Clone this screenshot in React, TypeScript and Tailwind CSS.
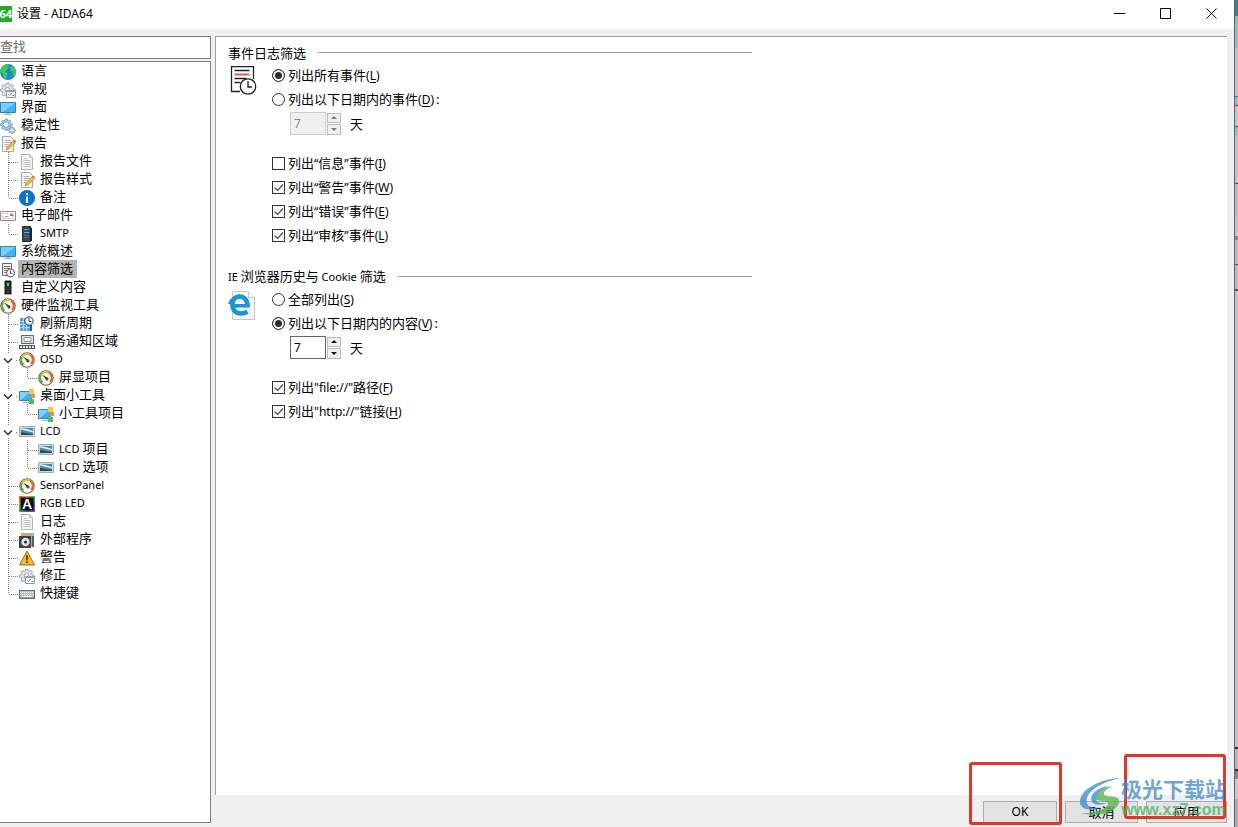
import React, { useState } from 'react';

type IconName =
  | 'globe' | 'gear' | 'monitor' | 'cogs' | 'report' | 'file' | 'info' | 'mail' | 'server' | 'filter'
  | 'tower' | 'gauge' | 'refresh' | 'tray' | 'gadget' | 'lcd' | 'rgb' | 'speaker' | 'warning' | 'keyboard';

type Guide = 'line' | 'tee' | 'end' | 'open';

interface TreeItem {
  label: string;
  icon: IconName;
  guides?: Guide[];
}

const TREE: TreeItem[] = [
  { label: '语言', icon: 'globe' },
  { label: '常规', icon: 'gear' },
  { label: '界面', icon: 'monitor' },
  { label: '稳定性', icon: 'cogs' },
  { label: '报告', icon: 'report' },
  { label: '报告文件', icon: 'file', guides: ['tee'] },
  { label: '报告样式', icon: 'report', guides: ['tee'] },
  { label: '备注', icon: 'info', guides: ['end'] },
  { label: '电子邮件', icon: 'mail' },
  { label: 'SMTP', icon: 'server', guides: ['end'] },
  { label: '系统概述', icon: 'monitor' },
  { label: '内容筛选', icon: 'filter' },
  { label: '自定义内容', icon: 'tower' },
  { label: '硬件监视工具', icon: 'gauge' },
  { label: '刷新周期', icon: 'refresh', guides: ['tee'] },
  { label: '任务通知区域', icon: 'tray', guides: ['tee'] },
  { label: 'OSD', icon: 'gauge', guides: ['open'] },
  { label: '屏显项目', icon: 'gauge', guides: ['line', 'end'] },
  { label: '桌面小工具', icon: 'gadget', guides: ['open'] },
  { label: '小工具项目', icon: 'gadget', guides: ['line', 'end'] },
  { label: 'LCD', icon: 'lcd', guides: ['open'] },
  { label: 'LCD 项目', icon: 'lcd', guides: ['line', 'tee'] },
  { label: 'LCD 选项', icon: 'lcd', guides: ['line', 'end'] },
  { label: 'SensorPanel', icon: 'gauge', guides: ['tee'] },
  { label: 'RGB LED', icon: 'rgb', guides: ['tee'] },
  { label: '日志', icon: 'file', guides: ['tee'] },
  { label: '外部程序', icon: 'speaker', guides: ['tee'] },
  { label: '警告', icon: 'warning', guides: ['tee'] },
  { label: '修正', icon: 'gear', guides: ['tee'] },
  { label: '快捷键', icon: 'keyboard', guides: ['end'] },
];

// slices of the window behind, visible along the right edge
const BACKDROP = [
  'h-4 bg-[#2f8496]', 'h-8 bg-[#8dbdc6]', 'h-12 bg-[#c3c6c6]', 'h-px bg-[#3e7c8a]', 'h-2 bg-[#93bfc7]',
  'h-px bg-[#444]', 'h-5 bg-[#bccbce]', 'h-px bg-[#444]', 'h-2 bg-[#93bfc7]', 'h-12 bg-[#c3c6c6]',
  'h-px bg-[#444]', 'h-8 bg-[#b9bcbc]', 'h-5 bg-[#c3c6c6]', 'h-1 bg-[#8a8d8d]', 'h-6 bg-[#b9bcbc]',
  'h-px bg-[#555]', 'h-6 bg-[#b9bcbc]', 'h-0.5 bg-[#555]', 'flex-1 bg-[#c3c6c6]', 'h-0.5 bg-[#333]',
  'h-5 bg-[#b5b8b8]', 'h-0.5 bg-[#333]', 'h-2 bg-[#858888]', 'h-5 bg-[#c9cccc]', 'h-7 bg-[#a9acac]',
];

// Latin runs are set smaller than the CJK text around them
const Mixed: React.FC<{ text: string; latin?: string }> = ({ text, latin = 'text-[11px]' }) => (
  <>
    {text.split(/([\x20-\x7e“”]+)/).filter(Boolean).map((part, i) =>
      /^[\x20-\x7e“”]/.test(part) ? <span key={i} className={`whitespace-pre ${latin}`}>{part}</span> : part
    )}
  </>
);

const GEAR = 'M6.6 1h2.2l.4 1.9 1.2.5L12 2.3l1.6 1.6-1.1 1.6.5 1.2 1.9.4v2.2l-1.9.4-.5 1.2 1.1 1.6-1.6 1.6-1.6-1.1-1.2.5-.4 1.9H6.6l-.4-1.9-1.2-.5-1.6 1.1-1.6-1.6 1.1-1.6-.5-1.2-1.9-.4V7.1l1.9-.4.5-1.2-1.1-1.6 1.6-1.6L5 3.4l1.2-.5z';

const ICONS: Record<IconName, React.ReactNode> = {
  globe: (
    <>
      <circle cx="8" cy="8" r="8" fill="#1f86d8" />
      <path d="M1 4Q4 0 8 0l1 2-2 1 1 2-3 2 2 2v3l-1 3-2-1-1-4-3-3zM11 2l3 1 2 5-1 4-2-1v-3l-2-1-1-3z" fill="#42cf45" />
    </>
  ),
  gear: (
    <>
      <path d={GEAR} fill="#dde2e6" stroke="#98a1a8" strokeWidth=".9" />
      <circle cx="7.5" cy="8" r="2.4" fill="#fff" stroke="#98a1a8" />
      <path d="M6.5 8.5h9v7h-9z" fill="#f7fbff" stroke="#8c969e" />
      <path d="M6 8h10v2H6z" fill="#9aa4ab" />
      <path d="m8.5 12.5 1 1 2-2.3M12.5 13.5h1.5" fill="none" stroke="#2c83cf" />
    </>
  ),
  monitor: (
    <>
      <path d="M.5 2.5h15v10H.5z" fill="#42b4f5" stroke="#3c7fa8" />
      <path d="M1 3h14L3 12H1z" fill="#78d0ff" />
      <path d="M6 13h4v1h2v1H4v-1h2z" fill="#8fc4e4" />
    </>
  ),
  cogs: (
    <>
      <path d={GEAR} transform="scale(.82)" fill="#a9cfe8" stroke="#6f9cba" />
      <circle cx="6.2" cy="6.5" r="2.9" fill="#f4faff" stroke="#6f9cba" />
      <path d={GEAR} transform="translate(8.5 8.5) scale(.46)" fill="#b5cbdc" stroke="#7593a8" strokeWidth="1.5" />
      <circle cx="12" cy="12.2" r="1" fill="#fff" />
    </>
  ),
  report: (
    <>
      <path d="M2.5.5h8l3 3v12h-11z" fill="#f8f8f8" stroke="#a6a6a6" />
      <path d="M4.5 4.5h6M4.5 6.5h7M4.5 8.5h4M4.5 10.5h3" stroke="#b5b5b5" />
      <path d="m6 14 1-3 7-7 2 2-7 7z" fill="#f5b63c" stroke="#c27d20" strokeWidth=".6" />
      <path d="m13 5 1-1.5L16 5l-1 1.5z" fill="#e0656a" />
    </>
  ),
  file: (
    <>
      <path d="M2.5.5h8l3 3v12h-11z" fill="#f5f5f5" stroke="#b3b3b3" />
      <path d="M10.5.5v3h3M4.5 4.5h4M4.5 6.5h7M4.5 8.5h7M4.5 10.5h7M4.5 12.5h7" fill="none" stroke="#c2c2c2" />
    </>
  ),
  info: (
    <>
      <circle cx="8" cy="8" r="7.7" fill="#0b74d1" stroke="#075ba8" strokeWidth=".6" />
      <path d="M7 3h2v2H7zM7 6.5h2V13H7z" fill="#fff" />
    </>
  ),
  mail: (
    <>
      <path d="M.5 3.5h15v9H.5z" fill="#fafafa" stroke="#8f8f8f" />
      <path d="M2.5 5.5h11v5h-11z" fill="none" stroke="#e2a0a0" strokeDasharray="2 2" />
      <path d="M4.5 8.5h4" stroke="#aaa" />
      <path d="M10 6h3v2h-3z" fill="#5b94cc" />
    </>
  ),
  server: (
    <>
      <path d="M3.5.5h8v15h-8z" fill="#34485c" stroke="#222f3d" />
      <path d="m11 1 2 1v13l-2 .5z" fill="#1b2530" />
      <path d="M5 3.5h5M5 6.5h5" stroke="#52b3f3" />
      <path d="M5 9.5h5M5 11.5h5" stroke="#566e84" />
    </>
  ),
  filter: (
    <>
      <path d="M2.5 1.5h9v12h-9z" fill="#f3f3f3" stroke="#666" />
      <path d="M4 4.5h6" stroke="#d33c3c" />
      <path d="M4 6.5h6M4 8.5h3M4 10.5h2" stroke="#777" />
      <circle cx="10.5" cy="11" r="4" fill="#fff" stroke="#555" />
      <path d="M10.5 8.5v3h2" fill="none" stroke="#555" />
    </>
  ),
  tower: (
    <>
      <path d="M5 1h6v13H5z" fill="#303030" stroke="#161616" />
      <path d="M7 3h2v3H7z" fill="#49db54" />
      <path d="M4 14h8v1H4z" fill="#a3a3a3" />
    </>
  ),
  gauge: (
    <>
      <circle cx="8" cy="8" r="7.2" fill="#fdfaf2" stroke="#6f624f" strokeWidth="1.1" />
      <path d="M4.5 12.5A5.6 5.6 0 0 1 3 5" fill="none" stroke="#43ad48" strokeWidth="2" />
      <path d="M3 5A5.6 5.6 0 0 1 11 3" fill="none" stroke="#efb52f" strokeWidth="2" />
      <path d="M11 3A5.6 5.6 0 0 1 12 12" fill="none" stroke="#e2632f" strokeWidth="2" />
      <path d="M4 4.5 10 8l-1.5 2z" fill="#333" />
      <circle cx="9" cy="9" r="1.5" fill="#444" />
    </>
  ),
  refresh: (
    <>
      <path d="M1 2h10v13H1z" fill="#55a2dc" />
      <path d="M1 5.5h10M1 8.5h10M1 11.5h12M4.5 2v13M7.5 2v13" stroke="#a8d6f5" />
      <path d="M11 9h2v6h-2z" fill="#2d5d90" />
      <circle cx="10" cy="5" r="4.2" fill="#f8f8f8" stroke="#333" />
      <path d="M10 2v3.5h2.5" fill="none" stroke="#333" />
    </>
  ),
  tray: (
    <>
      <path d="M2.5 1.5h12v8h-12z" fill="#dbe7f3" stroke="#5c6771" />
      <path d="M5 3.5h7v4H5z" fill="#fff" stroke="#8298ac" />
      <path d="M0 11h16v4H0z" fill="#4d565e" />
      <path d="M1 13h14" stroke="#e7edf2" strokeWidth="2" strokeDasharray="2 1" />
    </>
  ),
  gadget: (
    <>
      <path d="M.5 3.5h12v9H.5z" fill="#3cb0f3" stroke="#3981ad" />
      <path d="M1 4h10L2 12H1z" fill="#7ad2ff" />
      <path d="M4 14h6v1H4z" fill="#88bddd" />
      <path d="M10 1h5v5h-5z" fill="#f6c83e" />
      <path d="M12 6h4v4h-4z" fill="#ed8d55" />
      <path d="M10 11h5v5h-5z" fill="#48c152" />
    </>
  ),
  lcd: (
    <>
      <path d="M.5 2.5h15v10H.5z" fill="#d0d5d9" stroke="#a5adb3" />
      <path d="M2 4h12v7H2z" fill="#4c88b3" />
      <path d="M2 5.500 8 7l6 1.500V7L8 5 2 4z" fill="#d8edf7" />
      <path d="m2 8 5 1 7 1v1H2z" fill="#264d56" />
    </>
  ),
  rgb: (
    <>
      <defs>
        <linearGradient id="rainbow" x1="0" y1="0" x2="1" y2="1">
          <stop offset="0" stopColor="#f33" />
          <stop offset=".25" stopColor="#e8a020" />
          <stop offset=".5" stopColor="#2fc04f" />
          <stop offset=".75" stopColor="#3355f0" />
          <stop offset="1" stopColor="#b02fd8" />
        </linearGradient>
      </defs>
      <path d="M0 0h16v16H0z" fill="url(#rainbow)" />
      <path d="M1.5 1.5h13v13h-13z" fill="#0b0b12" />
      <text x="8" y="13" textAnchor="middle" fontSize="13" fontWeight="900" fill="#fff" fontFamily="Lato, sans-serif">A</text>
    </>
  ),
  speaker: (
    <>
      <path d="M2 1h13v14H2z" fill="#d7a66d" />
      <path d="M8 1h7v7z" fill="#8bc1a5" />
      <path d="M0 4h12v12H0z" fill="#39434f" />
      <circle cx="6.5" cy="10" r="4.2" fill="#dfe4e8" />
      <circle cx="6.5" cy="10" r="1.6" fill="#303942" />
      <path d="M13 4h2v11h-2z" fill="#50606d" />
    </>
  ),
  warning: (
    <>
      <path d="M8 1 15.5 15H.5z" fill="#fcb72c" stroke="#9b6c19" strokeLinejoin="round" />
      <path d="M7.2 5.5h1.700l-.3 5H7.5zM7.2 11.5h1.600v1.600H7.2z" fill="#222" />
    </>
  ),
  keyboard: (
    <>
      <path d="M0 4h16v9H0z" fill="#6c737a" />
      <path d="M1 5h14v6.5H1z" fill="#b9bfc4" />
      <path d="M1 6.5h14M1 8.5h14" stroke="#f3f5f6" strokeDasharray="1 1" />
      <path d="M3 10.5h10" stroke="#f3f5f6" />
    </>
  ),
};

const GuideCell: React.FC<{ kind: Guide }> = ({ kind }) => (
  <svg width="19" height="18" className="shrink-0" fill="none" stroke="#7d7d7d" strokeDasharray="1 1">
    {kind === 'end' ? <path d="M8.5 0v10" /> : <path d="M8.5 0v18" />}
    {(kind === 'tee' || kind === 'end') && <path d="M9 10.5h9" />}
    {kind === 'open' && (
      <>
        <path d="M2 4h12v12H2z" fill="#fff" stroke="none" />
        <path d="M16 10.5h2" />
        <path d="m4 8.5 4 4 4-4" stroke="#333" strokeWidth="1.5" strokeDasharray="none" />
      </>
    )}
  </svg>
);

const Accel: React.FC<{ text: string; hotkey: string; suffix?: string }> = ({ text, hotkey, suffix }) => (
  <span className="whitespace-nowrap">
    <Mixed text={text} latin="text-xs" />
    <span className="text-xs">(<u className="underline-offset-2">{hotkey}</u>)</span>
    {suffix && <span className="ml-0.5">{suffix}</span>}
  </span>
);

interface OptionProps {
  text: string;
  hotkey: string;
  suffix?: string;
}

const Radio: React.FC<OptionProps & { name: string; checked: boolean; onSelect: () => void }> = ({
  name, checked, onSelect, ...label
}) => (
  <label className="flex h-6 items-center gap-[3px]">
    <input
      type="radio"
      name={name}
      checked={checked}
      onChange={onSelect}
      className="size-[13px] appearance-none rounded-full border border-[#333] bg-white checked:bg-[#2b3038] checked:shadow-[inset_0_0_0_2px_#fff]"
    />
    <Accel {...label} />
  </label>
);

const Check: React.FC<OptionProps & { initial?: boolean }> = ({ initial = true, ...label }) => {
  const [on, setOn] = useState(initial);
  return (
    <label className="flex h-6 items-center gap-[3px]">
      <span className="grid size-[13px]">
        <input
          type="checkbox"
          checked={on}
          onChange={() => setOn(!on)}
          className="col-start-1 row-start-1 size-[13px] appearance-none border border-[#333] bg-white"
        />
        {on && (
          <svg viewBox="0 0 13 13" className="pointer-events-none col-start-1 row-start-1 size-[13px]" fill="none" stroke="#444" strokeWidth="1.2">
            <path d="m2.5 6.5 3 3 5.5-6" />
          </svg>
        )}
      </span>
      <Accel {...label} />
    </label>
  );
};

const DaySpinner: React.FC<{ disabled?: boolean }> = ({ disabled }) => {
  const [days, setDays] = useState(7);
  const arrow = disabled ? '#777' : '#111';
  const button = 'grid flex-1 place-items-center border border-[#bbb] bg-[#f0f0f0]';
  return (
    <div className="ml-[18px] flex h-[25px] items-center">
      <input
        type="text"
        aria-label="天"
        value={days}
        disabled={disabled}
        onChange={(e) => setDays(Number(e.target.value) || 0)}
        className="h-[23px] w-9 border border-[#666] bg-white px-[3px] text-xs disabled:border-[#ccc] disabled:bg-[#f0f0f0] disabled:text-[#888]"
      />
      <div className="ml-px flex h-[22px] w-[14px] flex-col gap-px">
        <button type="button" aria-label="+" disabled={disabled} onClick={() => setDays(days + 1)} className={button}>
          <svg width="6" height="3"><path d="m3 0 3 3H0z" fill={arrow} /></svg>
        </button>
        <button type="button" aria-label="-" disabled={disabled} onClick={() => setDays(days - 1)} className={button}>
          <svg width="6" height="3"><path d="M0 0h6L3 3z" fill={arrow} /></svg>
        </button>
      </div>
      <span className="ml-[9px]">天</span>
    </div>
  );
};

const Group: React.FC<{ title: string; icon: React.ReactNode; children: React.ReactNode }> = ({ title, icon, children }) => (
  <section className="max-w-[524px]">
    <div className="flex h-[21px] items-center gap-3">
      <h2 className="whitespace-nowrap"><Mixed text={title} /></h2>
      <div className="h-px flex-1 bg-[#a0a0a0]" />
    </div>
    <div className="flex">
      <div className="w-11 shrink-0 pt-[3px]">{icon}</div>
      <div className="flex flex-col items-start">{children}</div>
    </div>
  </section>
);

const LogIcon = (
  <svg width="30" height="32" viewBox="0 0 30 32" fill="none" stroke="#222" strokeWidth="1.3" className="ml-0.5">
    <path d="M10 25.5H1.5V.7h22V13" />
    <path d="M4.5 4.5h15M4.5 12.5h12M4.5 16.5h6" />
    <path d="M4.5 8.5h15" stroke="#d9534f" strokeWidth="2" />
    <circle cx="18" cy="20.5" r="7.7" fill="#fff" />
    <path d="M18 15v6h4" />
  </svg>
);

const IeIcon = (
  <svg width="28" height="32" viewBox="0 0 28 32" fill="none">
    <path d="M4.5 1.5h16l6 6v22h-22z" fill="#f6f6f6" stroke="#c9c9c9" />
    <path d="M20.5 1.5v6h6" fill="#fff" stroke="#c9c9c9" />
    <path d="M19.5 16.5c0-7-4-10-8-10C7 6.500 4 10.500 4.500 16c.5 5 4 7.500 8.500 7.500 2.500 0 4.500-.6 6.500-1.700" stroke="#1b96d4" strokeWidth="4.6" />
    <path d="M6 15.800h15.600" stroke="#1b96d4" strokeWidth="3.6" />
    <path d="M1 14C3 9 7 6.500 12 5.500" stroke="#1b96d4" strokeWidth="2.5" />
  </svg>
);

const App: React.FC = () => {
  const [selected, setSelected] = useState('内容筛选');
  const [logRange, setLogRange] = useState('all');
  const [ieRange, setIeRange] = useState('days');
  const footerButton = 'h-[22px] border border-[#adadad] bg-[#e3e3e3]';

  return (
    <div className="relative flex h-screen overflow-hidden bg-white font-['Noto_Sans','Noto_Sans_CJK_SC',sans-serif] text-[13px] leading-[18px] text-black">
      <div className="flex min-w-0 flex-1 flex-col border-r border-[#5f6566] bg-[#f0f0f0]">
        <header className="flex h-[29px] shrink-0 items-center bg-white pb-0.5">
          <div className="flex h-4 w-3 shrink-0 justify-end overflow-hidden bg-[#22ab25] text-[11px] leading-4 font-bold text-white">
            64
          </div>
          <h1 className="ml-[5px] flex-1 text-xs">设置 - AIDA64</h1>
          <button type="button" aria-label="最小化" className="grid h-full w-[46px] place-items-center">
            <svg width="11" height="11" stroke="#000"><path d="M0 5.5h11" /></svg>
          </button>
          <button type="button" aria-label="最大化" className="grid h-full w-[46px] place-items-center">
            <svg width="11" height="11" fill="none" stroke="#000"><path d="M.5.5h10v10H.5z" /></svg>
          </button>
          <button type="button" aria-label="关闭" className="grid h-full w-[46px] place-items-center">
            <svg width="11" height="11" stroke="#000"><path d="m.5.5 10 10m0-10-10 10" /></svg>
          </button>
        </header>

        <div className="flex min-h-0 flex-1 pt-[7px]">
          <aside className="mr-1 mb-1 flex w-[211px] shrink-0 flex-col gap-0.5">
            <input
              type="text"
              aria-label="查找"
              placeholder="查找"
              className="h-[23px] w-full border border-l-0 border-[#7a7a7a] bg-white pb-1 placeholder:text-[#6d6d6d]"
            />
            <ul className="min-h-0 flex-1 overflow-hidden border border-l-0 border-[#828282] bg-white">
              {TREE.map((item) => (
                <li key={item.label} className="flex h-[18px] items-center">
                  {item.guides?.map((g, i) => <GuideCell key={i} kind={g} />)}
                  <svg width="16" height="16" viewBox="0 0 16 16" className="mt-0.5 shrink-0">{ICONS[item.icon]}</svg>
                  <button
                    type="button"
                    onClick={() => setSelected(item.label)}
                    className={`ml-0.5 h-[18px] pr-1 pb-0.5 pl-[3px] leading-4 whitespace-nowrap ${selected === item.label ? 'bg-[#b4b4b4]' : ''}`}
                  >
                    <Mixed text={item.label} />
                  </button>
                </li>
              ))}
            </ul>
          </aside>

          <div className="flex min-w-0 flex-1 flex-col pr-[7px]">
            <main className="flex min-h-0 flex-1 flex-col gap-[19px] border-t border-l border-[#a0a0a0] bg-white pt-[5px] pl-3">
              <Group title="事件日志筛选" icon={LogIcon}>
                <Radio name="log" text="列出所有事件" hotkey="L" checked={logRange === 'all'} onSelect={() => setLogRange('all')} />
                <Radio name="log" text="列出以下日期内的事件" hotkey="D" suffix=":" checked={logRange === 'days'} onSelect={() => setLogRange('days')} />
                <DaySpinner disabled={logRange !== 'days'} />
                <div className="mt-[15px]">
                  <Check text="列出“信息”事件" hotkey="I" initial={false} />
                  <Check text="列出“警告”事件" hotkey="W" />
                  <Check text="列出“错误”事件" hotkey="E" />
                  <Check text="列出“审核”事件" hotkey="L" />
                </div>
              </Group>
              <Group title="IE 浏览器历史与 Cookie 筛选" icon={IeIcon}>
                <Radio name="ie" text="全部列出" hotkey="S" checked={ieRange === 'all'} onSelect={() => setIeRange('all')} />
                <Radio name="ie" text="列出以下日期内的内容" hotkey="V" suffix=":" checked={ieRange === 'days'} onSelect={() => setIeRange('days')} />
                <DaySpinner disabled={ieRange !== 'days'} />
                <div className="mt-[15px]">
                  <Check text={'列出"file://"路径'} hotkey="F" />
                  <Check text={'列出"http://"链接'} hotkey="H" />
                </div>
              </Group>
            </main>
            <footer className="flex h-8 shrink-0 items-center justify-end gap-2 pt-0.5">
              <button type="button" className={`w-[74px] text-xs ${footerButton}`}>OK</button>
              <button type="button" className={`w-[73px] ${footerButton}`}>取消</button>
              <button type="button" className={`w-[81px] ${footerButton}`}>应用</button>
            </footer>
          </div>
        </div>
      </div>

      <div className="flex w-[3px] shrink-0 flex-col">
        {BACKDROP.map((slice, i) => <div key={i} className={slice} />)}
      </div>

      {/* Highlight boxes round OK and Apply */}
      <div className="pointer-events-none absolute right-[176px] bottom-0.5 h-[63px] w-[93px] rounded-[3px] border-3 border-[#e2352b]" />
      <div className="pointer-events-none absolute right-3 bottom-2 h-[65px] w-[102px] rounded-[3px] border-3 border-[#e2352b]" />

      {/* Watermark */}
      <div className="pointer-events-none absolute right-3 bottom-2 flex items-center opacity-75">
        <svg width="48" height="42" viewBox="0 0 48 44">
          <path d="M45 1C26 1 3 12 2 25c-1 10 12 11 22 7-9 1-16-1-15-8C10 13 29 4 45 1z" fill="#3689d2" />
          <path d="M36 10c-12 0-21 7-19 12 2 4 11 2 14 5 3 4-8 11-28 11 20 5 37-1 40-11 2-8-10-6-15-8-3-2 2-7 8-9z" fill="#55b14c" />
          <path d="M32 9C21 11 12 18 14 25c2 5 10 5 16 2-6 1-11 0-11-4 0-5 6-10 13-14z" fill="#3689d2" />
        </svg>
        <div className="-ml-1 flex flex-col items-center whitespace-nowrap">
          <span className="text-[21px] leading-6 font-bold text-[#3d88d0]">极光下载站</span>
          <span className="font-['Liberation_Sans',sans-serif] text-base leading-[18px] font-bold text-[#4caf61]">www.xz7.com</span>
        </div>
      </div>
    </div>
  );
};

export default App;
